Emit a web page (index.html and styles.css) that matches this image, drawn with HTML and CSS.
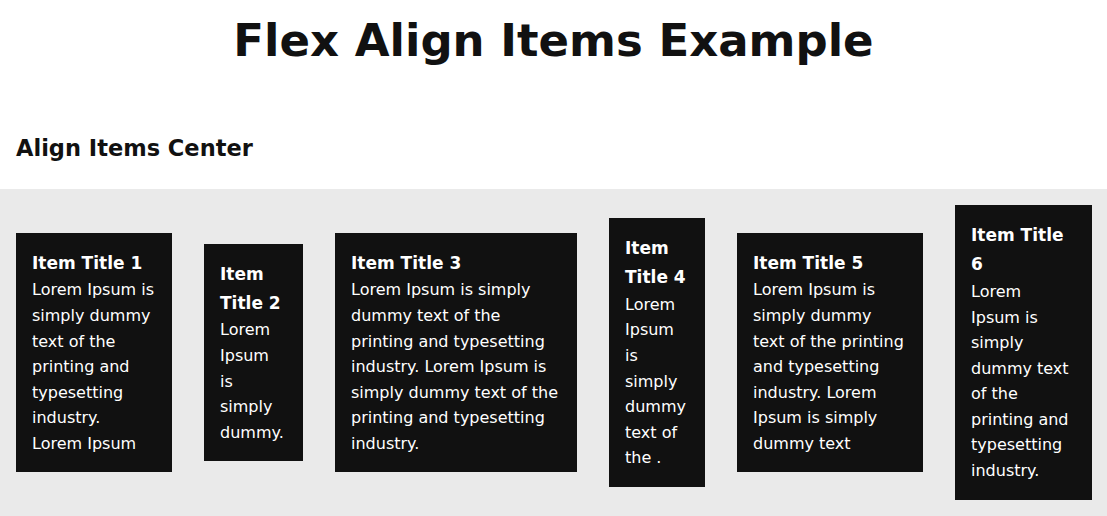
FILE: index.html
```html
<!DOCTYPE html>
<html lang="en">
<head>
    <meta charset="UTF-8">
    <meta name="viewport" content="width=device-width, initial-scale=1.0">
    <title>Flex Align Items Example</title>
    <link rel="stylesheet" href="styles.css">
</head>
<body>
    <h1 class="page-title">Flex Align Items Example</h1>

    <section class="example">
        <h2 class="example-title">Align Items Center</h2>

        <div class="flex-container align-center">
            <div class="item item-1">
                <h3>Item Title 1</h3>
                <p>Lorem Ipsum is simply dummy text of the printing and typesetting industry.<br>Lorem Ipsum</p>
            </div>
            <div class="item item-2">
                <h3>Item Title 2</h3>
                <p>Lorem Ipsum is simply dummy.</p>
            </div>
            <div class="item item-3">
                <h3>Item Title 3</h3>
                <p>Lorem Ipsum is simply dummy text of the printing and typesetting industry. Lorem Ipsum is simply dummy text of the printing and typesetting industry.</p>
            </div>
            <div class="item item-4">
                <h3>Item Title 4</h3>
                <p>Lorem Ipsum is simply dummy text of the .</p>
            </div>
            <div class="item item-5">
                <h3>Item Title 5</h3>
                <p>Lorem Ipsum is simply dummy text of the printing and typesetting industry. Lorem Ipsum is simply dummy text</p>
            </div>
            <div class="item item-6">
                <h3>Item Title 6</h3>
                <p>Lorem Ipsum is simply dummy text of the printing and typesetting industry.</p>
            </div>
        </div>
    </section>
</body>
</html>
```

FILE: styles.css
```css
* {
    margin: 0;
    padding: 0;
    box-sizing: border-box;
}

body {
    font-family: "DejaVu Sans", "Open Sans", sans-serif;
    color: #111;
    background: #fff;
}

.page-title {
    font-size: 45px;
    font-weight: 700;
    line-height: 1.2;
    text-align: center;
    padding: 14px 16px 0;
}

.example-title {
    font-size: 22.5px;
    font-weight: 700;
    line-height: 1.2;
    padding: 67px 16px 27px;
}

.flex-container {
    display: flex;
    gap: 32px;
    padding: 16px;
    min-height: 327px;
    background: #eaeaea;
}

.align-center {
    align-items: center;
}

.item {
    flex: 0 0 auto;
    background: #111;
    color: #fff;
    padding: 16px;
}

.item h3 {
    font-size: 17px;
    font-weight: 700;
    line-height: 28.8px;
}

.item p {
    font-size: 16px;
    line-height: 25.6px;
}

.item-1 { width: 156px; }
.item-2 { width: 99px; padding-right: 17px; }
.item-3 { width: 242px; }
.item-4 { width: 96px; }
.item-5 { width: 186px; }
.item-6 { width: 137px; padding-right: 17px; }
```
